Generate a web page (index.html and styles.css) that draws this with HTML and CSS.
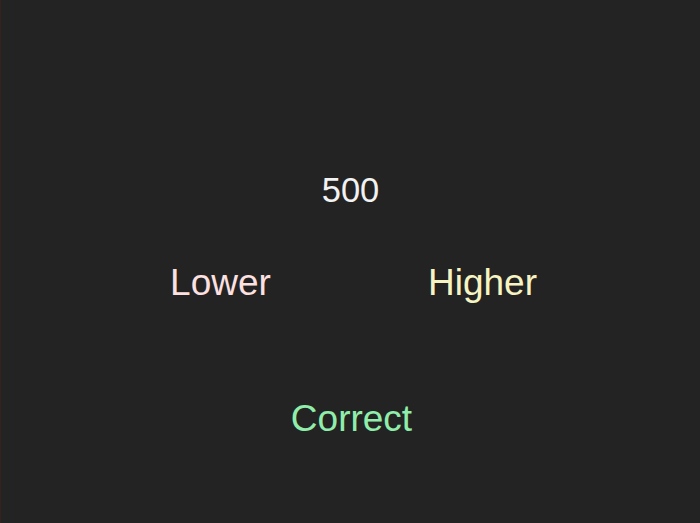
FILE: index.html
```html
<!DOCTYPE html>
<html>
<head>
<meta charset="utf-8">
<link rel="stylesheet" href="styles.css">
</head>
<body>
<main class="game">
  <div class="guess">500</div>
  <div class="choices">
    <button class="btn lower">Lower</button>
    <button class="btn higher">Higher</button>
  </div>
  <button class="btn correct">Correct</button>
</main>
</body>
</html>
```
FILE: styles.css
```css
html, body {
  margin: 0;
  padding: 0;
  height: 100%;
}
body {
  background: #232323;
  border-left: 1px solid #3a1f1f;
  box-sizing: border-box;
  font-family: "Liberation Sans", Arial, sans-serif;
}
.game {
  height: 100%;
  display: flex;
  flex-direction: column;
  align-items: center;
  padding-top: 170px;
  box-sizing: border-box;
}
.guess {
  color: #f2f2f2;
  font-size: 34.5px;
  line-height: 40px;
}
.choices {
  display: grid;
  grid-template-columns: 262px 262px;
  justify-items: center;
  margin-top: 52px;
  margin-left: 2px;
}
.btn {
  background: none;
  border: none;
  padding: 0;
  margin: 0;
  font-family: inherit;
  font-size: 37px;
  line-height: 42px;
  cursor: pointer;
}
.lower { color: #fde0e0; }
.higher { color: #f6f4c2; }
.correct {
  color: #90eeaa;
  margin-top: 94px;
  margin-left: 2px;
}
```
